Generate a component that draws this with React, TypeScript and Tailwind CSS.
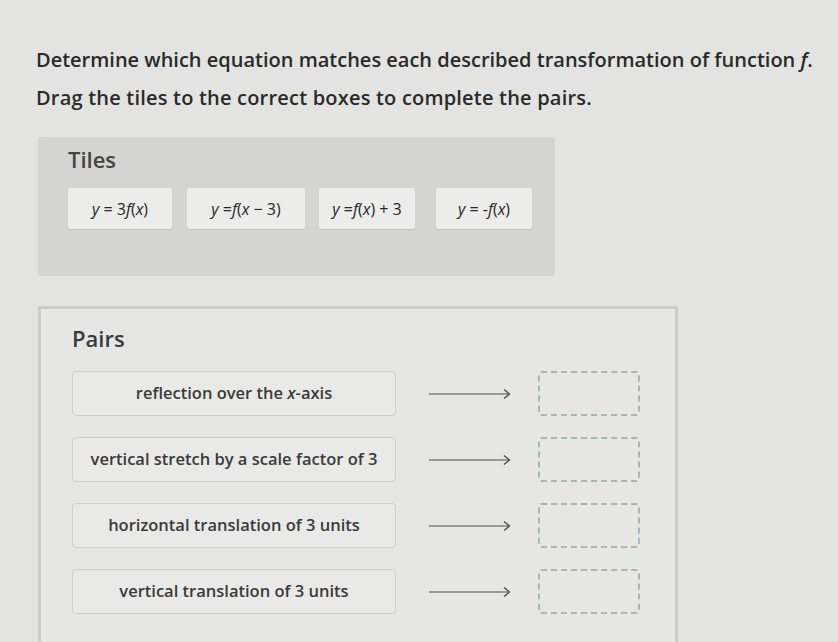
import React from "react";

const font = { fontFamily: '"Open Sans", "Noto Sans", sans-serif' };

function Eq({ w, children }: { w: string; children: React.ReactNode }) {
  return (
    <div
      className={`flex h-[41px] ${w} items-center justify-center rounded-[3px] bg-[#ecedea] text-[16px] text-[#262626] shadow-[0_1px_1px_rgba(0,0,0,0.08)]`}
    >
      {children}
    </div>
  );
}

const I = ({ children }: { children: React.ReactNode }) => <i>{children}</i>;

function Arrow() {
  return (
    <svg width="84" height="12" viewBox="0 0 84 12" className="shrink-0">
      <line x1="1" y1="6" x2="81" y2="6" stroke="#4a4a4a" strokeWidth="1.2" />
      <polyline points="76,1.5 81.5,6 76,10.5" fill="none" stroke="#4a4a4a" strokeWidth="1.3" />
    </svg>
  );
}

function PairRow({ label }: { label: React.ReactNode }) {
  return (
    <div className="flex items-center">
      <div className="flex h-[45px] w-[324px] items-center justify-center rounded-[4px] border border-[#cfd0cd] bg-[#e9eae7] text-[16.5px] font-semibold text-[#3a3a3a]">
        {label}
      </div>
      <div className="ml-[32px]">
        <Arrow />
      </div>
      <div className="ml-[26px] h-[45px] w-[102px] rounded-[3px] border-2 border-dashed border-[#a3b8b7]" />
    </div>
  );
}

export default function App() {
  return (
    <div className="min-h-[642px] w-[838px] overflow-hidden bg-[#e3e4e1] pl-[36px] pt-[46px]" style={font}>
      <p className="text-[20px] font-semibold leading-[28px] text-[#2a2a2a]">
        Determine which equation matches each described transformation of function <I>f</I>.
      </p>
      <p className="mt-[10px] text-[20px] font-semibold leading-[28px] tracking-[0.2px] text-[#2a2a2a]">
        Drag the tiles to the correct boxes to complete the pairs.
      </p>

      <div className="mt-[25px] ml-[2px] h-[139px] w-[517px] rounded-[3px] bg-[#d4d5d2] pl-[30px] pt-[6px]">
        <h2 className="text-[22px] font-semibold leading-[32px] text-[#444]">Tiles</h2>
        <div className="mt-[13px] flex">
          <Eq w="w-[104px]">
            <I>y</I>&nbsp;= 3<I>f</I>(<I>x</I>)
          </Eq>
          <div className="ml-[15px]">
            <Eq w="w-[118px]">
              <I>y</I>&nbsp;= <I>f</I>(<I>x</I>&nbsp;− 3)
            </Eq>
          </div>
          <div className="ml-[14px]">
            <Eq w="w-[96px]">
              <I>y</I>&nbsp;= <I>f</I>(<I>x</I>) + 3
            </Eq>
          </div>
          <div className="ml-[21px]">
            <Eq w="w-[96px]">
              <I>y</I>&nbsp;= -<I>f</I>(<I>x</I>)
            </Eq>
          </div>
        </div>
      </div>

      <div className="mt-[30px] ml-[2px] h-[340px] w-[640px] border-[3px] border-b-0 border-[#cbccc9] bg-[#e6e7e4] pl-[31px] pt-[13px]">
        <h2 className="text-[22px] font-semibold leading-[32px] text-[#3a3a3a]">Pairs</h2>
        <div className="mt-[17px] flex flex-col gap-[21px]">
          <PairRow label={<span>reflection over the <I>x</I>-axis</span>} />
          <PairRow label="vertical stretch by a scale factor of 3" />
          <PairRow label="horizontal translation of 3 units" />
          <PairRow label="vertical translation of 3 units" />
        </div>
      </div>
    </div>
  );
}
